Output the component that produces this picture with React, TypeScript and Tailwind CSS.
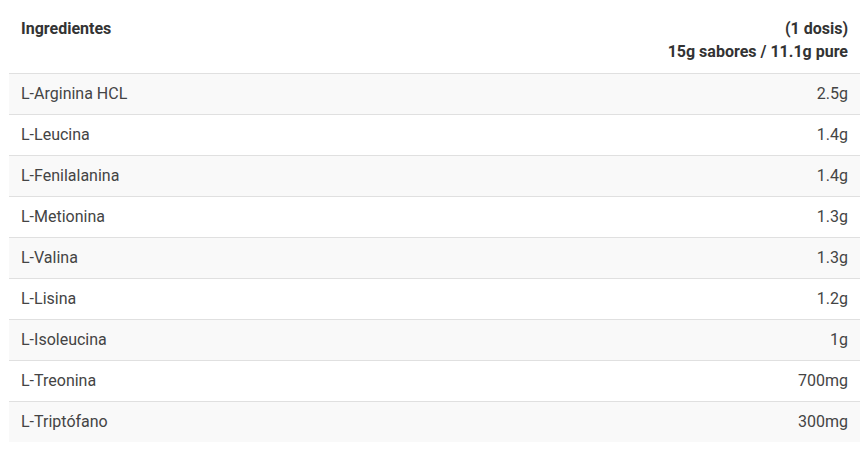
import React from "react";

const rows: [string, string][] = [
  ["L-Arginina HCL", "2.5g"],
  ["L-Leucina", "1.4g"],
  ["L-Fenilalanina", "1.4g"],
  ["L-Metionina", "1.3g"],
  ["L-Valina", "1.3g"],
  ["L-Lisina", "1.2g"],
  ["L-Isoleucina", "1g"],
  ["L-Treonina", "700mg"],
  ["L-Triptófano", "300mg"],
];

export default function App() {
  return (
    <div className="w-[868px] h-[459px] bg-white pl-[9px] pr-[8px]" style={{ fontFamily: "Roboto, sans-serif" }}>
      <div className="flex justify-between px-3 pt-[17px] pb-[10px] text-[16px] leading-[23px] font-bold text-[#333]">
        <div>Ingredientes</div>
        <div className="text-right">
          <div>(1 dosis)</div>
          <div>15g sabores / 11.1g pure</div>
        </div>
      </div>
      {rows.map(([name, amount], i) => (
        <div
          key={name}
          className={`flex justify-between items-center h-[41px] border-t border-[#e0e0e0] px-3 text-[16px] text-[#444] ${i % 2 === 0 ? "bg-[#f9f9f9]" : "bg-white"}`}
        >
          <span>{name}</span>
          <span>{amount}</span>
        </div>
      ))}
    </div>
  );
}
